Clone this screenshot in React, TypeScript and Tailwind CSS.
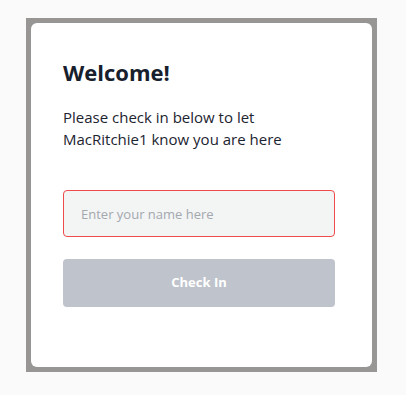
export default function App() {
  return (
    <div className="min-h-screen bg-[#fafafa] pt-[18px] pl-[26px] font-['Open_Sans',sans-serif]">
      <div className="w-[351px] h-[354px] bg-[#979695] p-[5px]">
        <div className="h-full bg-white rounded-[6px] pt-[35px] pl-[32px]">
          <h1 className="text-[22px] leading-[28px] font-bold text-[#17202c]">Welcome!</h1>
          <p className="mt-[20px] text-[15px] leading-[22px] text-[#1c2430]">
            Please check in below to let
            <br />
            MacRitchie1 know you are here
          </p>
          <form className="mt-[40px] w-[272px]" onSubmit={e => e.preventDefault()}>
            <input
              type="text"
              placeholder="Enter your name here"
              className="block w-full h-[47px] px-[17px] bg-[#f3f4f4] border border-[#ef4b4b] rounded-[4px] text-[13px] text-[#1c2430] placeholder:text-[#a3a8af] outline-none"
            />
            <button
              type="submit"
              disabled
              className="mt-[22px] w-full h-[48px] bg-[#bfc3cb] rounded-[4px] text-[13px] font-bold text-white"
            >
              Check In
            </button>
          </form>
        </div>
      </div>
    </div>
  );
}
